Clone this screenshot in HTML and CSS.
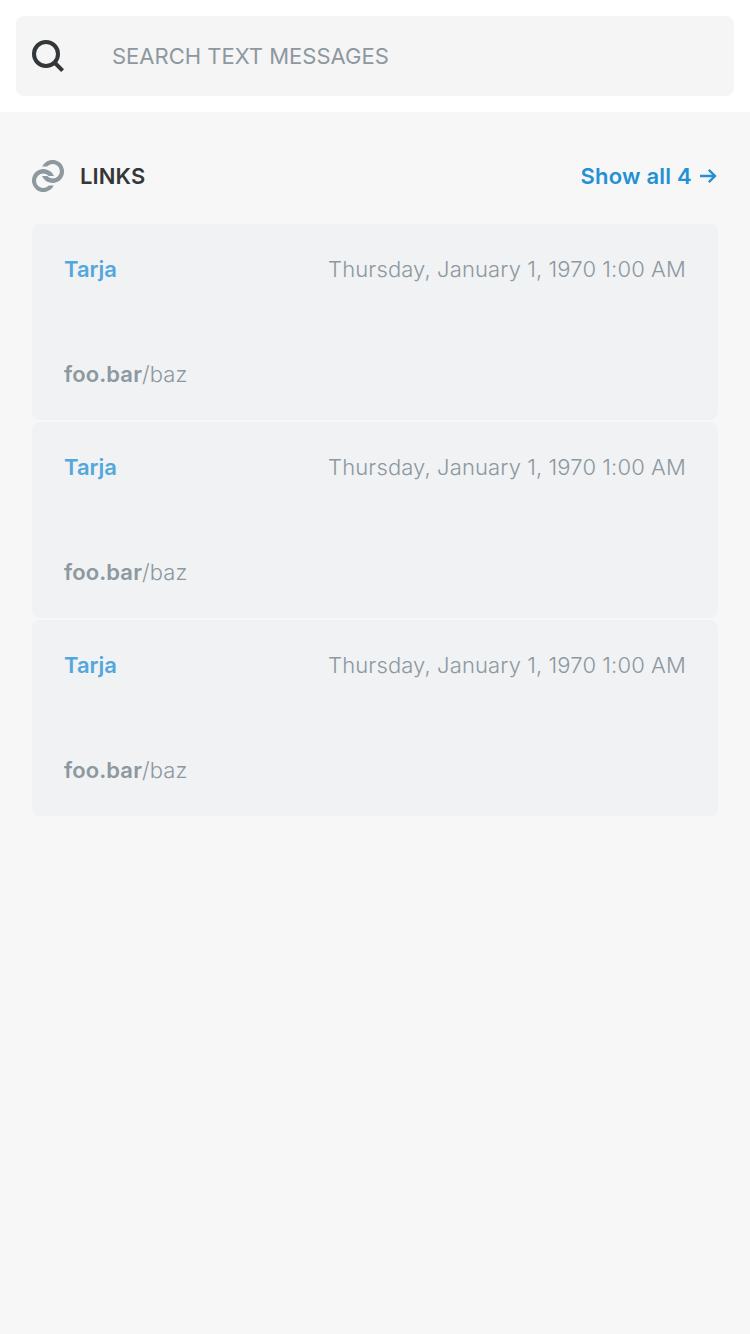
FILE: index.html
```html
<!DOCTYPE html>
<html lang="en">
<head>
<meta charset="utf-8">
<title>Search</title>
<link rel="stylesheet" href="styles.css">
</head>
<body>
<header class="search-header">
  <div class="search-field">
    <svg class="search-icon" viewBox="0 0 32 32"><circle cx="14" cy="14" r="12"/><path d="M22.5 22.5L30.6 30.6"/></svg>
    <span class="placeholder">SEARCH TEXT MESSAGES</span>
  </div>
</header>
<main class="results">
  <div class="section-head">
    <svg class="link-icon" viewBox="0 0 32 32"><path d="M10.2 6.4A11.5 11.5 0 1 1 10 16.1H15.2A7.3 7.3 0 1 0 15.2 6.4Z"/><path d="M21.8 25.6A11.5 11.5 0 1 1 22 15.9H16.8A7.3 7.3 0 1 0 16.8 25.6Z"/></svg>
    <span class="section-title">LINKS</span>
    <span class="show-all">Show all 4</span>
    <svg class="arrow" viewBox="0 0 18 16"><path d="M0 8H15M8.8 1.8L15 8L8.8 14.2"/></svg>
  </div>
  <div class="cards">
    <article class="card"><div class="meta"><span class="sender">Tarja</span><time class="date">Thursday, January 1, 1970 1:00 AM</time></div><div class="link"><b class="host">foo.bar</b><span class="path">/baz</span></div></article>
    <article class="card"><div class="meta"><span class="sender">Tarja</span><time class="date">Thursday, January 1, 1970 1:00 AM</time></div><div class="link"><b class="host">foo.bar</b><span class="path">/baz</span></div></article>
    <article class="card"><div class="meta"><span class="sender">Tarja</span><time class="date">Thursday, January 1, 1970 1:00 AM</time></div><div class="link"><b class="host">foo.bar</b><span class="path">/baz</span></div></article>
  </div>
</main>
</body>
</html>
```
FILE: styles.css
```css
* { box-sizing: border-box; }
body { margin: 0; min-height: 1334px; background: #f7f7f7; font: 22px/28px Inter, sans-serif; }
.search-header { height: 112px; padding: 16px; background: #fff; }
.search-field { display: flex; align-items: center; gap: 48px; height: 80px; padding: 0 16px; border-radius: 8px; background: #f5f5f5; }
svg { display: block; flex: none; fill: none; }
.search-icon { width: 32px; height: 32px; stroke: #33373a; stroke-width: 4; }
.placeholder { color: #8d989f; }
.results { padding: 48px 32px 0; }
.section-head { display: flex; align-items: center; height: 32px; margin-bottom: 32px; }
.link-icon { width: 32px; height: 32px; margin-right: 16px; fill: #8d989f; }
.section-title { font-weight: 580; letter-spacing: 0.1px; color: #33373a; }
.show-all { margin-left: auto; margin-right: 8px; font-weight: 580; letter-spacing: 0.24px; color: #2391d3; }
.arrow { width: 18px; height: 16px; stroke: #2391d3; stroke-width: 2.4; }
.cards { display: grid; gap: 2px; }
.card { display: flex; flex-direction: column; justify-content: space-between; height: 196px; padding: 31px 32px 32px; border-radius: 8px; background: #f0f2f4; }
.meta { display: flex; justify-content: space-between; }
.sender { font-weight: 580; color: #54a7dc; }
.date, .path { font-weight: 300; letter-spacing: 0.13px; color: #8d989f; }
.date { word-spacing: -0.1px; }
.host { font-weight: 600; letter-spacing: 0.12px; color: #8d989f; }
```
